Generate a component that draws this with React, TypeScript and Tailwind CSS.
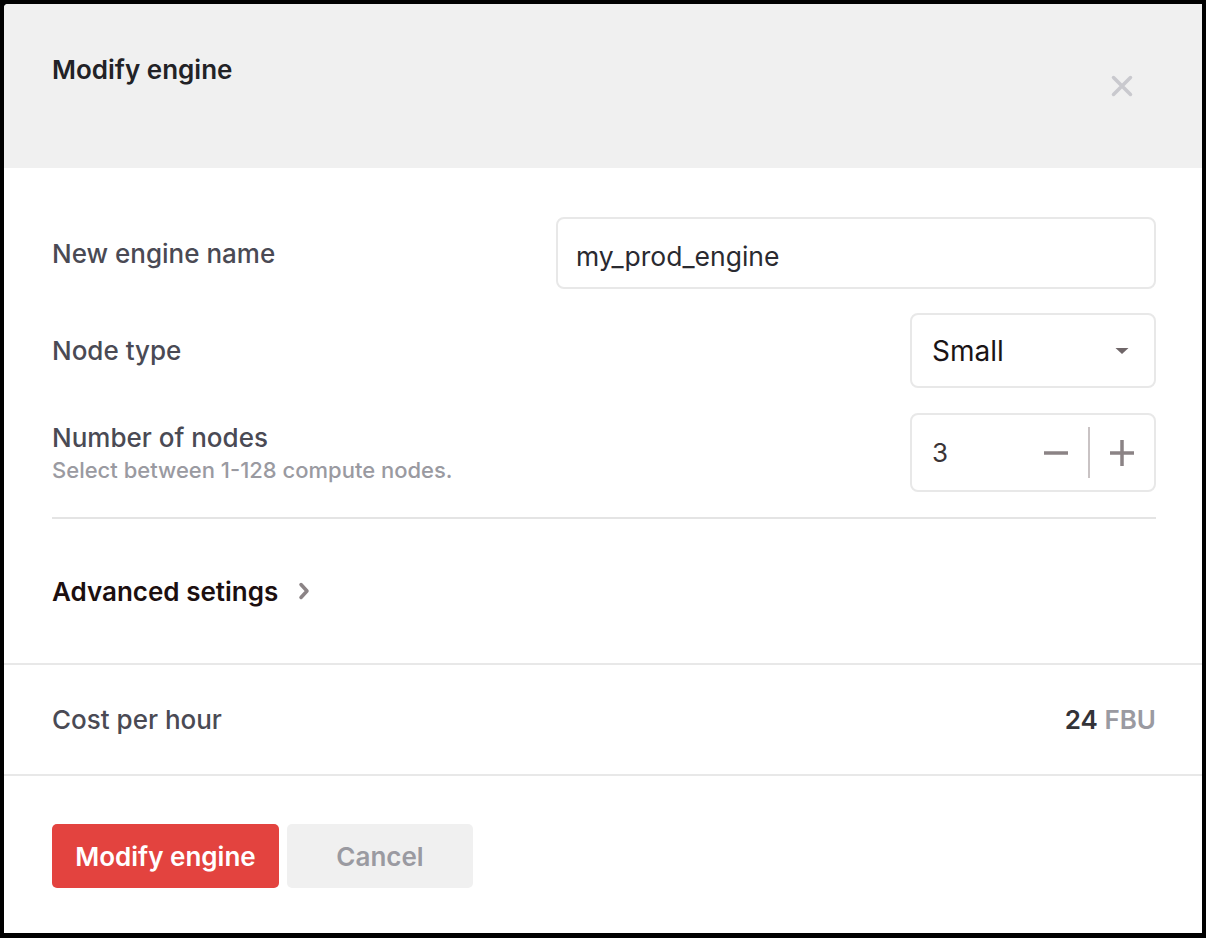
import React from "react";

const App: React.FC = () => {
  return (
    <div
      className="w-[1206px] h-[938px] bg-black p-1 pb-[5px]"
      style={{ fontFamily: "Inter, 'Liberation Sans', sans-serif" }}
    >
      <div className="h-full w-full bg-white rounded-tl-[4px] overflow-hidden flex flex-col">
        {/* Header */}
        <div className="relative h-[164px] bg-[#f0f0f0] shrink-0">
          <h1 className="absolute left-12 top-[50px] text-[26px] leading-[32px] font-semibold text-[#222226]">
            Modify engine
          </h1>
          <button className="absolute left-[1104px] top-[68px] w-7 h-7 flex items-center justify-center text-[#c9c9ce]">
            <svg width="22" height="22" viewBox="0 0 22 22" fill="none">
              <path
                d="M2.5 2.5L19.5 19.5M19.5 2.5L2.5 19.5"
                stroke="currentColor"
                strokeWidth="3.5"
                strokeLinecap="round"
              />
            </svg>
          </button>
        </div>

        {/* Form */}
        <div className="pl-12 pr-[46px] pt-[49px]">
          <div className="flex items-center justify-between h-[72px]">
            <label className="text-[26px] text-[#4a4a54] font-medium">
              New engine name
            </label>
            <div className="w-[600px] h-[72px] border-2 border-[#e8e8e8] rounded-[8px] flex items-center px-[18px] pt-2 text-[26.5px] text-[#2a2a30]">
              my_prod_engine
            </div>
          </div>

          <div className="flex items-center justify-between h-[75px] mt-6">
            <label className="text-[26px] text-[#4a4a54] font-medium">
              Node type
            </label>
            <div className="w-[246px] h-[75px] border-2 border-[#e8e8e8] rounded-[8px] flex items-center justify-between pl-[20px] pr-[25px] text-[28px] text-[#1a1416]">
              <span>Small</span>
              <svg width="14" height="8" viewBox="0 0 14 8">
                <path d="M0.5 1h13L7 7z" fill="#6f6668" />
              </svg>
            </div>
          </div>

          <div className="flex items-center justify-between h-[79px] mt-[25px]">
            <div className="flex flex-col pt-[2px]">
              <label className="text-[26px] leading-[32px] text-[#4a4a54] font-medium">
                Number of nodes
              </label>
              <span className="text-[22px] leading-[32px] text-[#9a9aa1] font-medium">
                Select between 1-128 compute nodes.
              </span>
            </div>
            <div className="w-[246px] h-[79px] border-2 border-[#e8e8e8] rounded-[8px] flex items-center pl-[20px] pr-[20px] text-[26px] text-[#3a3436]">
              <span className="flex-1">3</span>
              <svg width="24" height="26" viewBox="0 0 24 26" className="mr-[20px]">
                <path d="M0 13h24" stroke="#8b8385" strokeWidth="3.5" />
              </svg>
              <div className="w-[2px] h-[51px] bg-[#c9c3c4] mr-[20px]" />
              <svg width="24" height="26" viewBox="0 0 24 26">
                <path d="M0 13h24M12 0v26" stroke="#8b8385" strokeWidth="3.5" />
              </svg>
            </div>
          </div>

          <div className="h-[2px] bg-[#e4e4e4] mt-[25px]" />

          <div className="flex items-center h-[144px] gap-5">
            <span className="text-[26px] font-semibold text-[#1c0f10]">
              Advanced setings
            </span>
            <svg width="12" height="18" viewBox="0 0 12 18">
              <path
                d="M3 2.5l6 6.5-6 6.5"
                stroke="#8b8385"
                strokeWidth="3.5"
                fill="none"
                strokeLinecap="round"
                strokeLinejoin="round"
              />
            </svg>
          </div>
        </div>

        <div className="h-[2px] bg-[#e8e8e8]" />

        <div className="flex items-center justify-between h-[109px] pl-12 pr-[46px]">
          <span className="text-[26px] text-[#4a4a54] font-medium">
            Cost per hour
          </span>
          <span className="text-[26px] font-semibold">
            <span className="text-[#333338]">24</span>{" "}
            <span className="text-[#9a9aa1]">FBU</span>
          </span>
        </div>

        <div className="h-[2px] bg-[#e8e8e8]" />

        <div className="flex items-center gap-2 px-12 pt-[48px]">
          <button className="h-16 w-[227px] rounded-[5px] bg-[#e3433f] text-white text-[26px] font-semibold">
            Modify engine
          </button>
          <button className="h-16 w-[186px] rounded-[5px] bg-[#f0f0f0] text-[#9a9aa1] text-[26px] font-semibold">
            Cancel
          </button>
        </div>
      </div>
    </div>
  );
};

export default App;
